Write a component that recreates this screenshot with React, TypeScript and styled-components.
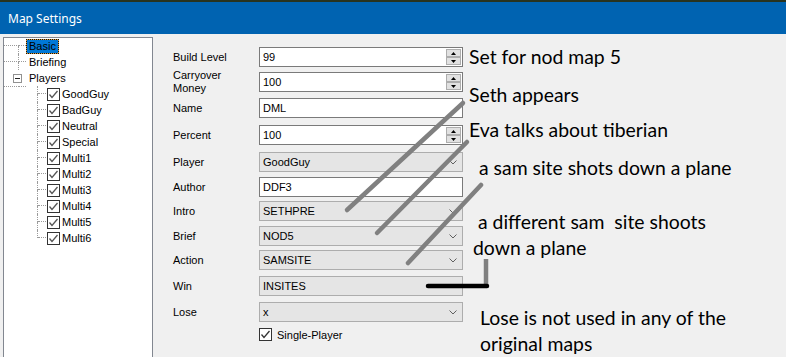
import React from "react";
import styled, { createGlobalStyle } from "styled-components";

const GlobalStyle = createGlobalStyle`
  html, body {
    margin: 0;
    padding: 0;
    background: #f0f0f0;
  }
  body {
    width: 786px;
    height: 357px;
    overflow: hidden;
  }
`;

const Window = styled.div`
  position: relative;
  width: 786px;
  height: 357px;
  overflow: hidden;
  background: #f0f0f0;
  font-family: "Liberation Sans", Arial, sans-serif;
  font-size: 11px;
  color: #000;
`;

const TitleBar = styled.div`
  height: 32px;
  border-top: 2px solid #28331f;
  background: #0063b1;
  color: #fff;
  font-family: "Noto Sans", "Open Sans", sans-serif;
  font-size: 12px;
  display: flex;
  align-items: center;
  padding-left: 8px;
`;

const Body = styled.div`
  display: flex;
  align-items: flex-start;
`;

const Tree = styled.div`
  margin: 3px 0 0 3px;
  width: 150px;
  height: 340px;
  box-sizing: border-box;
  border: 1px solid #828790;
  background: #fff;
  flex: none;
`;

const TreeRow = styled.div`
  display: flex;
  align-items: center;
  height: 16px;
`;

const Guide = styled.span<{ $lead: number; $tail: number }>`
  display: grid;
  grid-template-columns: ${(p) => p.$lead}px ${(p) => p.$tail}px;
  grid-template-rows: 8px 8px;
  flex: none;
  align-self: stretch;
`;

const GuideCell = styled.span<{ $right?: boolean; $bottom?: boolean }>`
  box-sizing: border-box;
  border-right: ${(p) => (p.$right ? "1px dotted #9a9a9a" : "0")};
  border-bottom: ${(p) => (p.$bottom ? "1px dotted #9a9a9a" : "0")};
`;

const Expander = styled.span`
  grid-column: 1 / span 2;
  grid-row: 1 / span 2;
  align-self: center;
  justify-self: start;
  margin-left: 9px;
  width: 9px;
  height: 9px;
  box-sizing: border-box;
  border: 1px solid #919191;
  background: #fff;
  display: flex;
  align-items: center;
  justify-content: center;

  &::after {
    content: "";
    width: 5px;
    height: 1px;
    background: #222;
  }
`;

const NodeLabel = styled.span<{ $selected?: boolean }>`
  height: 15px;
  box-sizing: border-box;
  line-height: 13px;
  padding: 0 2px;
  border: 1px solid transparent;
  white-space: nowrap;
  ${(p) =>
    p.$selected &&
    `
    border: 1px dotted #111;
    background: linear-gradient(#0078d7, #0078d7) padding-box,
      linear-gradient(#d99a3a, #d99a3a) border-box;
  `}
`;

const CheckBox = styled.span`
  flex: none;
  width: 13px;
  height: 13px;
  box-sizing: border-box;
  border: 1px solid #333;
  background: #fff;
  display: flex;
  align-items: center;
  justify-content: center;
`;

const TreeCheck = styled(CheckBox)`
  margin-left: 1px;
  margin-right: 2px;
`;

const Form = styled.div`
  margin: 13px 0 0 20px;
  display: grid;
  grid-template-columns: 86px 204px;
  grid-template-rows: 21px 22px 23px 23px 21px 20px 21px 20px 22px 22px 22px 14px;
  row-gap: 4px;
  align-items: start;
  flex: none;
`;

const FieldLabel = styled.span`
  height: 20px;
  display: flex;
  align-items: center;
  line-height: 13px;
`;

const Field = styled.div<{ $combo?: boolean }>`
  height: 20px;
  box-sizing: border-box;
  border: 1px solid ${(p) => (p.$combo ? "#adadad" : "#7a7a7a")};
  background: ${(p) => (p.$combo ? "#e5e5e5" : "#fff")};
  display: flex;
  align-items: center;
  padding: 0 1px 0 3px;
`;

const FieldText = styled.span`
  flex: 1;
`;

const Spinner = styled.span`
  display: flex;
  flex-direction: column;
  width: 15px;
  height: 16px;
`;

const SpinButton = styled.span`
  flex: 1;
  box-sizing: border-box;
  border: 1px solid #adadad;
  background: #e1e1e1;
  display: flex;
  align-items: center;
  justify-content: center;
`;

const Chevron = styled.svg`
  margin-right: 4px;
`;

const CheckRow = styled.div`
  grid-column: 2;
  display: flex;
  align-items: center;
  gap: 5px;
`;

const Notes = styled.div`
  margin: 10px 0 0 6px;
  display: flex;
  flex-direction: column;
  font-family: Lato, "Open Sans", sans-serif;
  font-size: 19.4px;
  line-height: 26px;
  white-space: nowrap;
`;

const Note = styled.div<{ $gap: number; $indent: number; $first?: number }>`
  margin-top: ${(p) => p.$gap}px;
  padding-left: ${(p) => p.$indent}px;
  text-indent: ${(p) => p.$first ?? 0}px;
`;

const Scribbles = styled.svg`
  position: absolute;
  left: 0;
  top: 0;
  pointer-events: none;
`;

function Tick({ color = "#555" }: { color?: string }) {
  return (
    <svg width="11" height="11" viewBox="0 0 11 11">
      <polyline points="1.5,5.5 4,8.5 9.5,2" fill="none" stroke={color} strokeWidth="1.3" />
    </svg>
  );
}

const rootNodes = ["Basic", "Briefing"];
const players = [
  "GoodGuy",
  "BadGuy",
  "Neutral",
  "Special",
  "Multi1",
  "Multi2",
  "Multi3",
  "Multi4",
  "Multi5",
  "Multi6",
];

type FieldDef = { label: string; kind: "spin" | "text" | "combo"; value: string; twoLine?: boolean };

const fields: FieldDef[] = [
  { label: "Build Level", kind: "spin", value: "99" },
  { label: "Carryover Money", kind: "spin", value: "100", twoLine: true },
  { label: "Name", kind: "text", value: "DML" },
  { label: "Percent", kind: "spin", value: "100" },
  { label: "Player", kind: "combo", value: "GoodGuy" },
  { label: "Author", kind: "text", value: "DDF3" },
  { label: "Intro", kind: "combo", value: "SETHPRE" },
  { label: "Brief", kind: "combo", value: "NOD5" },
  { label: "Action", kind: "combo", value: "SAMSITE" },
  { label: "Win", kind: "combo", value: "INSITES" },
  { label: "Lose", kind: "combo", value: "x" },
];

function Control({ field }: { field: FieldDef }) {
  if (field.kind === "combo") {
    return (
      <Field $combo>
        <FieldText>{field.value}</FieldText>
        <Chevron width="8" height="5" viewBox="0 0 8 5">
          <polyline points="0.5,0.5 4,4 7.5,0.5" fill="none" stroke="#606060" strokeWidth="1" />
        </Chevron>
      </Field>
    );
  }
  return (
    <Field>
      <FieldText>{field.value}</FieldText>
      {field.kind === "spin" && (
        <Spinner>
          <SpinButton>
            <svg width="5" height="3" viewBox="0 0 5 3">
              <polygon points="2.5,0 5,3 0,3" fill="#000" />
            </svg>
          </SpinButton>
          <SpinButton>
            <svg width="5" height="3" viewBox="0 0 5 3">
              <polygon points="0,0 5,0 2.5,3" fill="#000" />
            </svg>
          </SpinButton>
        </Spinner>
      )}
    </Field>
  );
}

export default function App() {
  return (
    <Window>
      <GlobalStyle />
      <TitleBar>Map Settings</TitleBar>
      <Body>
        <Tree>
          {rootNodes.map((name, i) => (
            <TreeRow key={name}>
              <Guide $lead={15} $tail={7}>
                <GuideCell $right={i > 0} $bottom />
                <GuideCell $bottom />
                <GuideCell $right />
                <GuideCell />
              </Guide>
              <NodeLabel $selected={i === 0}>{name}</NodeLabel>
            </TreeRow>
          ))}
          <TreeRow>
            <Guide $lead={15} $tail={7}>
              <GuideCell $right $bottom />
              <GuideCell $bottom />
              <GuideCell />
              <GuideCell />
              <Expander />
            </Guide>
            <NodeLabel>Players</NodeLabel>
          </TreeRow>
          {players.map((name, i) => (
            <TreeRow key={name}>
              <Guide $lead={34} $tail={8}>
                <GuideCell $right />
                <GuideCell $bottom />
                <GuideCell $right={i < players.length - 1} />
                <GuideCell />
              </Guide>
              <TreeCheck>
                <Tick />
              </TreeCheck>
              <span>{name}</span>
            </TreeRow>
          ))}
        </Tree>

        <Form>
          {fields.map((f) => (
            <React.Fragment key={f.label}>
              <FieldLabel>
                {f.twoLine ? (
                  <span>
                    Carryover
                    <br />
                    Money
                  </span>
                ) : (
                  f.label
                )}
              </FieldLabel>
              <Control field={f} />
            </React.Fragment>
          ))}
          <CheckRow>
            <CheckBox>
              <Tick color="#333" />
            </CheckBox>
            <span>Single-Player</span>
          </CheckRow>
        </Form>

        <Notes>
          <Note $gap={0} $indent={0}>Set for nod map 5</Note>
          <Note $gap={12} $indent={0}>Seth appears</Note>
          <Note $gap={9} $indent={0}>Eva talks about tiberian</Note>
          <Note $gap={12} $indent={10}>a sam site shots down a plane</Note>
          <Note $gap={28} $indent={4} $first={5}>
            a different sam&nbsp; site shoots
            <br />
            down a plane
          </Note>
          <Note $gap={44} $indent={11}>
            Lose is not used in any of the
            <br />
            original maps
          </Note>
        </Notes>
      </Body>

      <Scribbles width="786" height="357" viewBox="0 0 786 357">
        <g stroke="#808080" strokeWidth="4.5" strokeLinecap="round" fill="none">
          <line x1="463" y1="103" x2="347" y2="210" />
          <line x1="467" y1="142" x2="377" y2="233" />
          <line x1="481" y1="185" x2="408" y2="263" />
          <line x1="486" y1="259" x2="486" y2="284" strokeLinecap="butt" />
        </g>
        <line x1="428" y1="286" x2="487" y2="286" stroke="#000" strokeWidth="4.5" strokeLinecap="round" />
      </Scribbles>
    </Window>
  );
}
